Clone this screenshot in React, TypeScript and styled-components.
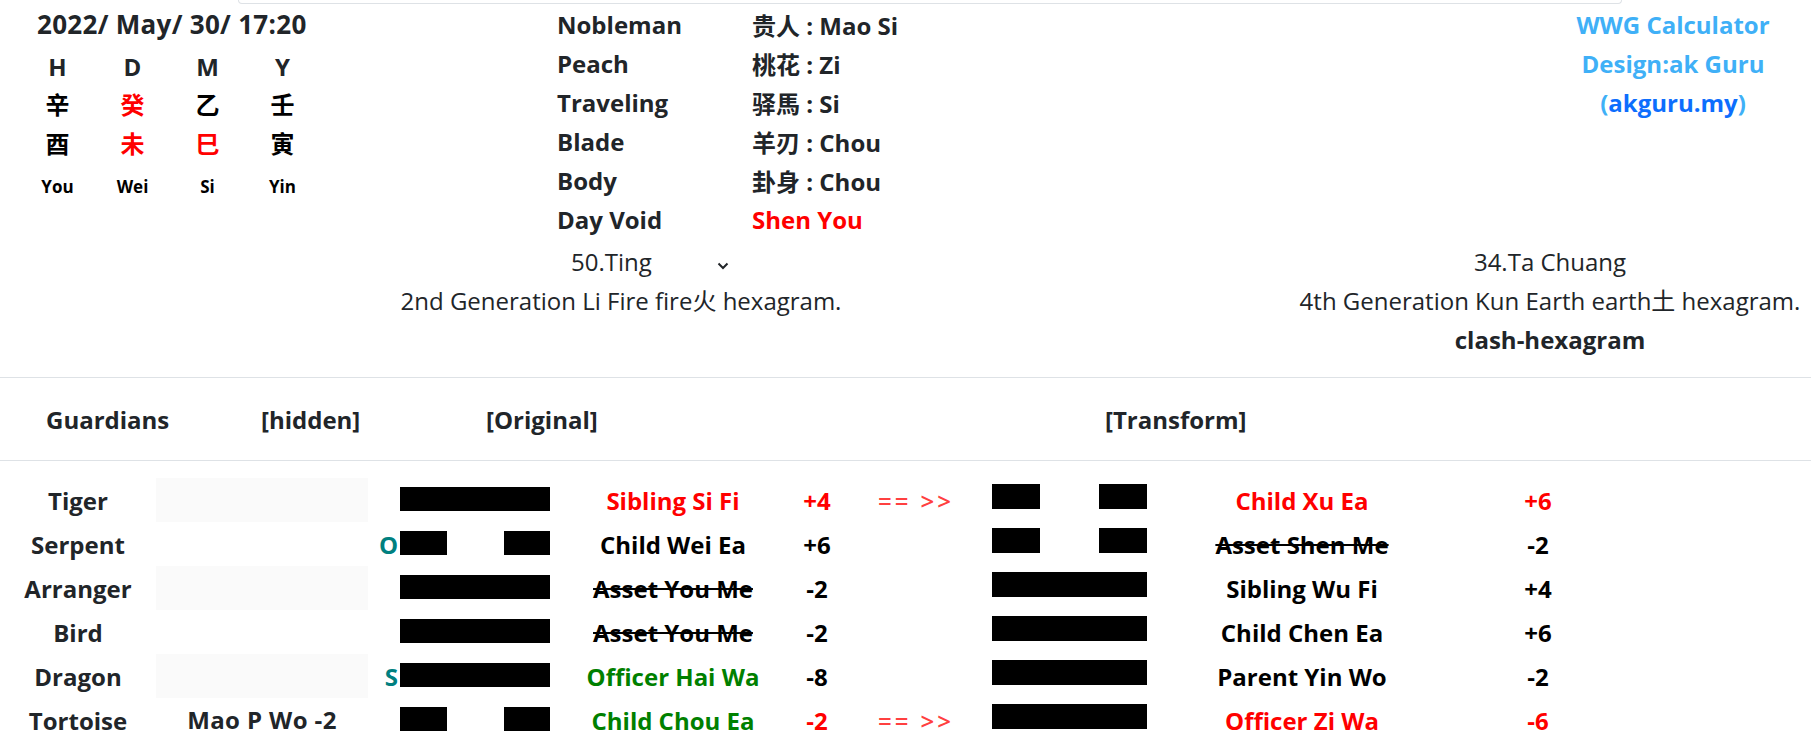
import React from 'react';
import styled, { createGlobalStyle } from 'styled-components';

type Tone = 'red' | 'green' | 'teal' | 'black' | 'dark';
const toneColor: Record<Tone, string> = {
  red: '#ff0000',
  green: '#008000',
  teal: '#008080',
  black: '#000000',
  dark: '#212529',
};

const GlobalStyle = createGlobalStyle`
  html, body { margin: 0; padding: 0; background: #ffffff; }
  body {
    font-family: "Open Sans", "Noto Sans CJK SC", sans-serif;
    color: #212529;
    font-size: 24px;
  }
  * { box-sizing: border-box; }
`;

const Page = styled.div`
  width: 1811px;
  overflow: hidden;
`;

const CardEdge = styled.div`
  margin-left: 238px;
  width: 1384px;
  height: 4px;
  border: 1px solid #dee2e6;
  border-top: none;
  border-radius: 0 0 6px 6px;
`;

const TopSection = styled.div`
  display: grid;
  grid-template-columns: 557px 978px 276px;
  padding-top: 1px;
`;

const LeftBlock = styled.div`
  display: flex;
  flex-direction: column;
  padding-left: 20px;
`;

const DateLine = styled.div`
  height: 42px;
  line-height: 39px;
  padding-left: 17px;
  font-weight: 700;
  font-size: 26px;
  letter-spacing: 0.3px;
  white-space: nowrap;
`;

const Pillars = styled.div`
  display: grid;
  grid-template-columns: repeat(4, 75px);
  grid-auto-rows: 39px;
  align-items: center;
  justify-items: center;
  font-weight: 700;
`;

const PillarHead = styled.div`
  font-size: 24px;
  color: #212529;
`;

const PillarChar = styled.div<{ $tone: Tone }>`
  font-family: "Noto Sans CJK SC", sans-serif;
  font-size: 24px;
  font-weight: 700;
  margin-top: -5px;
  color: ${(p) => toneColor[p.$tone]};
`;

const PillarName = styled.div`
  font-size: 17px;
  color: #000;
  padding-top: 5px;
`;

const InfoTable = styled.div`
  display: grid;
  grid-template-columns: 195px auto;
  grid-auto-rows: 39px;
  align-items: center;
  font-weight: 700;
  font-size: 24px;
`;

const InfoValue = styled.div<{ $tone: Tone }>`
  color: ${(p) => toneColor[p.$tone]};
  white-space: nowrap;
`;

const Credits = styled.div`
  display: flex;
  flex-direction: column;
  align-items: center;
  line-height: 39px;
  font-weight: 700;
  color: #3fb0f7;
`;

const SiteLink = styled.a`
  color: #0d6efd;
  text-decoration: none;
`;

const HexInfo = styled.div`
  display: grid;
  grid-template-columns: 1242px 1fr;
  margin-top: 3px;
  margin-bottom: 18px;
  line-height: 39px;
`;

const HexCol = styled.div<{ $offset?: number }>`
  display: flex;
  flex-direction: column;
  align-items: center;
  padding-left: ${(p) => p.$offset ?? 0}px;
  white-space: nowrap;
`;

const SelectWrap = styled.div`
  position: relative;
  align-self: flex-start;
  margin-left: 560px;
  width: 180px;
  height: 39px;
`;

const HexSelect = styled.select`
  appearance: none;
  -webkit-appearance: none;
  border: none;
  background: transparent;
  width: 100%;
  height: 39px;
  padding: 0 0 0 11px;
  font-family: "Open Sans", sans-serif;
  font-size: 24px;
  color: #212529;
  outline: none;
`;

const Chevron = styled.svg`
  position: absolute;
  right: 11px;
  top: 20px;
  pointer-events: none;
`;

const Bold = styled.div`
  font-weight: 700;
`;

const TableHead = styled.div`
  display: grid;
  grid-template-columns: 215px 225px 619px 1fr;
  align-items: center;
  height: 84px;
  padding-left: 46px;
  border-top: 1px solid #dee2e6;
  border-bottom: 1px solid #dee2e6;
  font-weight: 700;
`;

const TableBody = styled.div`
  padding-top: 17px;
`;

const Row = styled.div`
  display: grid;
  grid-template-columns: 156px 212px 32px 152px 242px 46px 152px 158px 304px 168px 1fr;
  height: 44px;
  align-items: center;
  font-weight: 700;
  white-space: nowrap;
`;

const Cell = styled.div<{ $tone?: Tone; $strike?: boolean }>`
  text-align: center;
  color: ${(p) => toneColor[p.$tone ?? 'black']};
  text-decoration: ${(p) => (p.$strike ? 'line-through' : 'none')};
`;

const Guardian = styled.div`
  text-align: center;
  color: #212529;
`;

const HiddenCell = styled.div<{ $shade: boolean }>`
  height: 44px;
  line-height: 44px;
  text-align: center;
  color: #212529;
  letter-spacing: 0.4px;
  background: ${(p) => (p.$shade ? '#fafafa' : 'transparent')};
`;

const Marker = styled.div`
  text-align: right;
  padding-right: 2px;
  color: #008080;
`;

const Arrow = styled.div`
  text-align: center;
  color: #ff4040;
  font-weight: 600;
  letter-spacing: 3px;
`;

const Yao = styled.div<{ $w: number; $h: number; $lift: number }>`
  display: flex;
  justify-content: space-between;
  width: ${(p) => p.$w}px;
  height: ${(p) => p.$h}px;
  margin-top: ${(p) => -p.$lift}px;
`;

const Segment = styled.div<{ $full: boolean }>`
  width: ${(p) => (p.$full ? '100%' : '31%')};
  height: 100%;
  background: #000;
`;

const Line: React.FC<{ yang: boolean; w: number; h: number; lift: number }> = ({ yang, w, h, lift }) => (
  <Yao $w={w} $h={h} $lift={lift}>
    {yang ? (
      <Segment $full />
    ) : (
      <>
        <Segment $full={false} />
        <Segment $full={false} />
      </>
    )}
  </Yao>
);

interface YaoRow {
  guardian: string;
  hidden: string;
  mark: string;
  orig: boolean;
  name: string;
  nameTone: Tone;
  nameStrike?: boolean;
  val: string;
  valTone: Tone;
  arrow: boolean;
  trans: boolean;
  tname: string;
  tnameTone: Tone;
  tnameStrike?: boolean;
  tval: string;
  tvalTone: Tone;
}

const rows: YaoRow[] = [
  { guardian: 'Tiger', hidden: '', mark: '', orig: true, name: 'Sibling Si Fi', nameTone: 'red', val: '+4', valTone: 'red', arrow: true, trans: false, tname: 'Child Xu Ea', tnameTone: 'red', tval: '+6', tvalTone: 'red' },
  { guardian: 'Serpent', hidden: '', mark: 'O', orig: false, name: 'Child Wei Ea', nameTone: 'black', val: '+6', valTone: 'black', arrow: false, trans: false, tname: 'Asset Shen Me', tnameTone: 'black', tnameStrike: true, tval: '-2', tvalTone: 'black' },
  { guardian: 'Arranger', hidden: '', mark: '', orig: true, name: 'Asset You Me', nameTone: 'black', nameStrike: true, val: '-2', valTone: 'black', arrow: false, trans: true, tname: 'Sibling Wu Fi', tnameTone: 'black', tval: '+4', tvalTone: 'black' },
  { guardian: 'Bird', hidden: '', mark: '', orig: true, name: 'Asset You Me', nameTone: 'black', nameStrike: true, val: '-2', valTone: 'black', arrow: false, trans: true, tname: 'Child Chen Ea', tnameTone: 'black', tval: '+6', tvalTone: 'black' },
  { guardian: 'Dragon', hidden: '', mark: 'S', orig: true, name: 'Officer Hai Wa', nameTone: 'green', val: '-8', valTone: 'black', arrow: false, trans: true, tname: 'Parent Yin Wo', tnameTone: 'black', tval: '-2', tvalTone: 'black' },
  { guardian: 'Tortoise', hidden: 'Mao P Wo -2', mark: '', orig: false, name: 'Child Chou Ea', nameTone: 'green', val: '-2', valTone: 'red', arrow: true, trans: true, tname: 'Officer Zi Wa', tnameTone: 'red', tval: '-6', tvalTone: 'red' },
];

const pillars = [
  { head: 'H', stem: '辛', stemTone: 'black' as Tone, branch: '酉', branchTone: 'black' as Tone, name: 'You' },
  { head: 'D', stem: '癸', stemTone: 'red' as Tone, branch: '未', branchTone: 'red' as Tone, name: 'Wei' },
  { head: 'M', stem: '乙', stemTone: 'black' as Tone, branch: '巳', branchTone: 'red' as Tone, name: 'Si' },
  { head: 'Y', stem: '壬', stemTone: 'black' as Tone, branch: '寅', branchTone: 'black' as Tone, name: 'Yin' },
];

const info: { label: string; value: string; tone: Tone }[] = [
  { label: 'Nobleman', value: '贵人 : Mao Si', tone: 'dark' },
  { label: 'Peach', value: '桃花 : Zi', tone: 'dark' },
  { label: 'Traveling', value: '驿馬 : Si', tone: 'dark' },
  { label: 'Blade', value: '羊刃 : Chou', tone: 'dark' },
  { label: 'Body', value: '卦身 : Chou', tone: 'dark' },
  { label: 'Day Void', value: 'Shen You', tone: 'red' },
];

export default function App() {
  return (
    <Page>
      <GlobalStyle />
      <CardEdge />
      <TopSection>
        <LeftBlock>
          <DateLine>2022/ May/ 30/ 17:20</DateLine>
          <Pillars>
            {pillars.map((p) => (
              <PillarHead key={'h' + p.head}>{p.head}</PillarHead>
            ))}
            {pillars.map((p) => (
              <PillarChar key={'s' + p.head} $tone={p.stemTone}>{p.stem}</PillarChar>
            ))}
            {pillars.map((p) => (
              <PillarChar key={'b' + p.head} $tone={p.branchTone}>{p.branch}</PillarChar>
            ))}
            {pillars.map((p) => (
              <PillarName key={'n' + p.head}>{p.name}</PillarName>
            ))}
          </Pillars>
        </LeftBlock>
        <InfoTable>
          {info.map((r) => (
            <React.Fragment key={r.label}>
              <div>{r.label}</div>
              <InfoValue $tone={r.tone}>{r.value}</InfoValue>
            </React.Fragment>
          ))}
        </InfoTable>
        <Credits>
          <div>WWG Calculator</div>
          <div>Design:ak Guru</div>
          <div>
            (<SiteLink href="#">akguru.my</SiteLink>)
          </div>
        </Credits>
      </TopSection>

      <HexInfo>
        <HexCol>
          <SelectWrap>
            <HexSelect defaultValue="50">
              <option value="50">50.Ting</option>
            </HexSelect>
            <Chevron width="12" height="8" viewBox="0 0 12 8">
              <polyline points="1.5,1.5 6,6 10.5,1.5" fill="none" stroke="#212529" strokeWidth="2" />
            </Chevron>
          </SelectWrap>
          <div>2nd Generation Li Fire fire火 hexagram.</div>
        </HexCol>
        <HexCol $offset={47}>
          <div>34.Ta Chuang</div>
          <div>4th Generation Kun Earth earth土 hexagram.</div>
          <Bold>clash-hexagram</Bold>
        </HexCol>
      </HexInfo>

      <TableHead>
        <div>Guardians</div>
        <div>[hidden]</div>
        <div>[Original]</div>
        <div>[Transform]</div>
      </TableHead>
      <TableBody>
        {rows.map((r, i) => (
          <Row key={r.guardian}>
            <Guardian>{r.guardian}</Guardian>
            <HiddenCell $shade={i % 2 === 0}>{r.hidden}</HiddenCell>
            <Marker>{r.mark}</Marker>
            <Line yang={r.orig} w={150} h={24} lift={2} />
            <Cell $tone={r.nameTone} $strike={r.nameStrike}>{r.name}</Cell>
            <Cell $tone={r.valTone}>{r.val}</Cell>
            <Arrow>{r.arrow ? '== >>' : ''}</Arrow>
            <Line yang={r.trans} w={155} h={25} lift={7} />
            <Cell $tone={r.tnameTone} $strike={r.tnameStrike}>{r.tname}</Cell>
            <Cell $tone={r.tvalTone}>{r.tval}</Cell>
            <div />
          </Row>
        ))}
      </TableBody>
    </Page>
  );
}
